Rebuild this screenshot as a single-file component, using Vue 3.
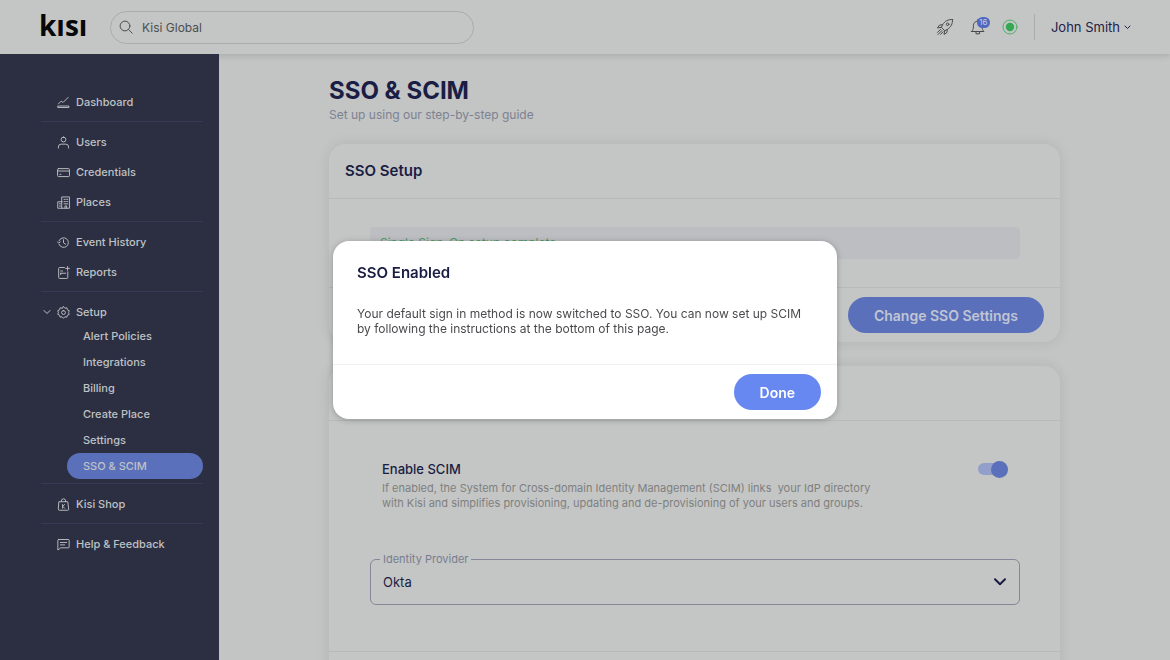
<script setup>
import { ref } from 'vue'

const search = ref('Kisi Global')
const provider = ref('Okta')
const scimEnabled = ref(true)
const dialogOpen = ref(true)

const sections = [
  [{ label: 'Dashboard', icon: 'dashboard' }],
  [
    { label: 'Users', icon: 'users' },
    { label: 'Credentials', icon: 'card' },
    { label: 'Places', icon: 'places' }
  ],
  [
    { label: 'Event History', icon: 'history' },
    { label: 'Reports', icon: 'reports' }
  ],
  [
    {
      label: 'Setup',
      icon: 'gear',
      children: ['Alert Policies', 'Integrations', 'Billing', 'Create Place', 'Settings', 'SSO & SCIM']
    }
  ],
  [{ label: 'Kisi Shop', icon: 'shop' }],
  [{ label: 'Help & Feedback', icon: 'help' }]
]
const current = 'SSO & SCIM'

const icons = {
  dashboard: 'M1.5 8.5 4.5 5.5 6.5 7 12 1.5M1.2 10.8h11.6v1.6H1.2z',
  users: 'M7 1.2a2.6 2.6 0 1 1 0 5.2 2.6 2.6 0 0 1 0-5.2zM1.5 13v-1.2a3 3 0 0 1 3-3h5a3 3 0 0 1 3 3V13',
  card: 'M1.6 2.8h10.8a1 1 0 0 1 1 1v6.6a1 1 0 0 1-1 1H1.6a1 1 0 0 1-1-1V3.8a1 1 0 0 1 1-1zM.6 5.4h12.8M3 9h1.2',
  places: 'M5.5 1h7.9v12.2H5.5zM5.5 6.2H.8v7h4.7M7.6 3.6h1.4M10.4 3.6h1.2M7.6 6h1.4M10.4 6h1.2M7.6 8.4h4M8.6 13v-2.3h1.8V13M2.6 8.4h1.2M2.6 10.8h1.2',
  history: 'M2.2 5.2A5.2 5.2 0 1 1 2.2 9M.4 6.2l1.5 1.6 1.6-1.5M7 4v3.4l2.2 1.4',
  reports: 'M8 1.6H2.8a1 1 0 0 0-1 1v9.8a1 1 0 0 0 1 1h7.8a1 1 0 0 0 1-1V6.2M4 5.4h2M4 7.8h5.4M4 7.8v1.4M11.4 .6v4M9.4 2.6h4',
  gear: 'M7 .7 8.500 2.400 10.700 2 11.200 4.100 13.200 5 12.500 7 13.200 9 11.200 9.900 10.700 12 8.500 11.600 7 13.300 5.500 11.600 3.300 12 2.800 9.900 .8 9 1.500 7 .8 5 2.800 4.100 3.300 2 5.500 2.400zM7 4.900a2.100 2.100 0 1 1 0 4.200 2.100 2.100 0 0 1 0-4.200z',
  shop: 'M2.400 4h9.200l1 8.200a1 1 0 0 1-1 1H2.400a1 1 0 0 1-1-1zM4.700 4V3.200a2.300 2.300 0 0 1 4.600 0V4M6 7v4M8.200 7 6.200 9l2 2',
  help: 'M1.700 1.600h10.600a.8.8 0 0 1 .8.8v7.400a.8.8 0 0 1-.8.8H4L.9 13V2.400a.8.8 0 0 1 .8-.8zM3.600 4.800h6.800M3.600 7.400h4.600'
}
</script>

<template>
  <div class="app">
    <header class="topbar">
      <a class="logo" href="#">kısı</a>
      <label class="search">
        <svg width="14" height="14" viewBox="0 0 14 14" aria-hidden="true">
          <circle cx="6" cy="6" r="4.900" />
          <path d="M9.600 9.600 13.200 13.200" />
        </svg>
        <input v-model="search" type="text" aria-label="Search" />
      </label>
      <div class="tools">
        <button class="tool" type="button" aria-label="What's new">
          <svg width="18" height="18" viewBox="0 0 18 18" aria-hidden="true">
            <path d="M16.500 1.500C12 1.300 9 3 6.500 6.800L5.300 9.300l3.400 3.400 2.500-1.200C15 9 16.700 6 16.500 1.500z" />
            <circle cx="11.600" cy="6.300" r="1.300" />
            <path d="M6.500 6.800 3.600 7 1.500 10l3.800-.7M11.200 11.500l-.2 2.900-3 2.100.7-3.800M4.600 11.300 1.500 14.400M6 12.500l-4 4M7 13.800l-2.300 2.500" />
          </svg>
        </button>
        <button class="tool" type="button" aria-label="Notifications">
          <svg width="16" height="18" viewBox="0 0 16 18" aria-hidden="true">
            <path d="M1.500 13.500h12.500c-1.500-1.300-1.800-2.500-1.800-4.500V7.500a4.400 4.400 0 0 0-8.800 0V9c0 2-.4 3.200-1.900 4.500zM7.800 3V1.500M6 14v1.800h3.600V14" />
          </svg>
          <span class="count">16</span>
        </button>
        <button class="tool" type="button" aria-label="Status">
          <svg width="16" height="16" viewBox="0 0 16 16" aria-hidden="true">
            <circle class="ring" cx="8" cy="8" r="7" />
            <circle class="dot" cx="8" cy="8" r="4.200" />
          </svg>
        </button>
      </div>
      <button class="account" type="button">
        John Smith
        <svg width="7" height="5" viewBox="0 0 7 5" aria-hidden="true"><path d="M1 1l2.500 2.500L6 1" /></svg>
      </button>
    </header>

    <div class="body">
      <nav class="sidebar">
        <ul v-for="(section, i) in sections" :key="i" class="section">
          <li v-for="item in section" :key="item.label">
            <a class="item" href="#">
              <svg v-if="item.children" class="caret" width="8" height="6" viewBox="0 0 8 6" aria-hidden="true">
                <path d="M1 1.500l3 3 3-3" />
              </svg>
              <svg width="13" height="13" viewBox="0 0 14 14" aria-hidden="true"><path :d="icons[item.icon]" /></svg>
              {{ item.label }}
            </a>
            <ul v-if="item.children" class="sublist">
              <li v-for="child in item.children" :key="child">
                <a class="subitem" :class="{ active: child === current }" href="#">{{ child }}</a>
              </li>
            </ul>
          </li>
        </ul>
      </nav>

      <main class="main">
        <h1>SSO &amp; SCIM</h1>
        <p class="subtitle">Set up using our step-by-step guide</p>

        <section class="card">
          <div class="card-head"><h2>SSO Setup</h2></div>
          <div class="card-body">
            <p class="notice">Single Sign-On setup complete</p>
          </div>
          <div class="card-foot">
            <button class="button muted" type="button">Change SSO Settings</button>
          </div>
        </section>

        <section class="card">
          <div class="card-head"></div>
          <div class="card-body scim">
            <div class="setting">
              <div>
                <label class="setting-title" for="scim">Enable SCIM</label>
                <p class="setting-text">
                  If enabled, the System for Cross-domain Identity Management (SCIM) links&nbsp; your IdP directory<br />
                  with Kisi and simplifies provisioning, updating and de-provisioning of your users and groups.
                </p>
              </div>
              <input id="scim" v-model="scimEnabled" class="switch" type="checkbox" />
            </div>
            <div class="field">
              <label for="provider">Identity Provider</label>
              <select id="provider" v-model="provider">
                <option>Okta</option>
              </select>
              <svg width="12" height="8" viewBox="0 0 12 8" aria-hidden="true"><path d="M1 1.200l5 5 5-5" /></svg>
            </div>
          </div>
          <div class="card-foot"></div>
        </section>
      </main>
    </div>

    <div v-if="dialogOpen" class="backdrop">
      <div class="dialog" role="dialog" aria-modal="true" aria-labelledby="dialog-title">
        <div class="dialog-body">
          <h2 id="dialog-title">SSO Enabled</h2>
          <p>
            Your default sign in method is now switched to SSO. You can now set up SCIM<br />
            by following the instructions at the bottom of this page.
          </p>
        </div>
        <div class="dialog-foot">
          <button class="button" type="button" @click="dialogOpen = false">Done</button>
        </div>
      </div>
    </div>
  </div>
</template>

<style>
body {
  margin: 0;
}
</style>

<style scoped>
.app {
  display: flex;
  flex-direction: column;
  height: 100vh;
  overflow: hidden;
  background: #c3c4c4;
  color: #1a1d44;
  font-family: Inter, "Open Sans", sans-serif;
  font-size: 12px;
}
h1, h2, p, ul {
  margin: 0;
  padding: 0;
}
ul {
  list-style: none;
}
a {
  color: inherit;
  text-decoration: none;
}
button, input, select {
  font: inherit;
  color: inherit;
}
button {
  border: 0;
  padding: 0;
  background: none;
  cursor: pointer;
}
svg {
  flex: none;
  fill: none;
  stroke: currentColor;
  stroke-linecap: round;
  stroke-linejoin: round;
}

.topbar {
  position: relative;
  z-index: 1;
  display: flex;
  align-items: center;
  box-sizing: border-box;
  height: 54px;
  flex: none;
  padding: 0 39px;
  background: #c4c6c5;
  box-shadow: 0 2px 6px rgba(0, 0, 0, 0.13);
}
.logo {
  width: 71px;
  padding-bottom: 4px;
  color: #070808;
  font: 700 28px/46px "Open Sans", sans-serif;
}
.search {
  display: flex;
  align-items: center;
  gap: 9px;
  box-sizing: border-box;
  width: 364px;
  height: 33px;
  padding: 0 8px;
  border: 1px solid #aaacab;
  border-radius: 17px;
  color: #4c4e4e;
}
.search input {
  flex: 1;
  min-width: 0;
  border: 0;
  padding: 0;
  outline: 0;
  background: none;
  font-size: 12px;
}
.tools {
  display: flex;
  align-items: center;
  gap: 16px;
  margin-left: auto;
  padding-right: 16px;
  color: #484a4c;
}
.tool {
  position: relative;
  display: flex;
}
.count {
  position: absolute;
  left: 7px;
  top: -1px;
  width: 13px;
  border-radius: 6px;
  background: #4f68c0;
  color: #c8cbd8;
  font-size: 8px;
  line-height: 11px;
  text-align: center;
}
.ring {
  stroke: #4fae68;
}
.dot {
  fill: #35a853;
  stroke: none;
}
.account {
  display: flex;
  align-items: center;
  gap: 4px;
  padding-left: 16px;
  border-left: 1px solid #acaeae;
  color: #1d2148;
  font-size: 13px;
  line-height: 26px;
}

.body {
  display: flex;
  flex: 1;
  min-height: 0;
}
.sidebar {
  position: relative;
  z-index: 2;
  box-sizing: border-box;
  width: 219px;
  flex: none;
  padding: 28px 16px 0 41px;
  background: #2c2f41;
  color: #bfc1c5;
  font-size: 11px;
  font-weight: 500;
}
.section {
  padding: 5px 0 4px;
  border-bottom: 1px solid #363b55;
}
.section:last-child {
  border-bottom: 0;
}
.item {
  position: relative;
  display: flex;
  align-items: center;
  gap: 6px;
  height: 30px;
  padding-left: 16px;
}
.caret {
  position: absolute;
  left: 2px;
}
.sublist {
  margin-top: -4px;
}
.subitem {
  display: block;
  margin-left: 26px;
  padding-left: 16px;
  border-radius: 13px;
  line-height: 26px;
}
.active {
  background: #5b70bb;
}

.main {
  flex: 1;
  min-width: 0;
  overflow: hidden auto;
  scrollbar-width: none;
  padding: 21px 110px 0;
}
h1 {
  font-size: 24px;
  line-height: 32px;
}
.subtitle {
  margin-bottom: 21px;
  color: #7d8292;
  font-size: 12px;
  line-height: 16px;
}
.card {
  margin-bottom: 24px;
  border-radius: 16px;
  background: #c4c6c5;
  box-shadow: 0 0 14px rgba(0, 0, 0, 0.09);
}
.card-head {
  box-sizing: border-box;
  height: 55px;
  padding: 0 16px;
  border-bottom: 1px solid #b8baba;
}
h2 {
  font-size: 15px;
  font-weight: 600;
  line-height: 20px;
}
.card-head h2 {
  line-height: 54px;
}
.card-body {
  padding: 28px 40px 28px 41px;
}
.notice {
  padding: 0 10px;
  border-radius: 4px;
  background: #bdbec1;
  color: #4f9c66;
  font-size: 12px;
  line-height: 32px;
}
.card-foot {
  display: flex;
  justify-content: flex-end;
  box-sizing: border-box;
  min-height: 55px;
  padding: 9px 16px;
  border-top: 1px solid #b8baba;
}
.button {
  height: 36px;
  padding: 0 26px;
  border-radius: 18px;
  background: #6787f1;
  color: #fff;
  font-size: 14px;
  font-weight: 600;
}
.muted {
  background: #5b70bb;
  color: #c0c5d3;
}
.scim {
  padding: 38px 40px 46px 41px;
}
.setting {
  display: flex;
  justify-content: space-between;
  align-items: flex-start;
  padding: 0 12px;
}
.setting-title {
  display: block;
  font-size: 13px;
  font-weight: 500;
  line-height: 20px;
}
.setting-text {
  margin-top: 2px;
  color: #7e8080;
  font-size: 11px;
  line-height: 15px;
}
.switch {
  display: flex;
  align-items: center;
  justify-content: flex-end;
  appearance: none;
  width: 30px;
  height: 12px;
  margin: 4px 0 0;
  border-radius: 6px;
  background: #929fca;
}
.switch::before {
  content: "";
  width: 17px;
  height: 17px;
  flex: none;
  border-radius: 50%;
  background: #5b70bb;
}
.switch:not(:checked) {
  justify-content: flex-start;
}
.field {
  position: relative;
  display: flex;
  align-items: center;
  margin-top: 48px;
}
.field label {
  position: absolute;
  left: 10px;
  top: -8px;
  padding: 0 3px;
  background: #c4c6c5;
  color: #777d90;
  font-size: 11px;
  line-height: 16px;
}
.field select {
  appearance: none;
  box-sizing: border-box;
  width: 100%;
  height: 46px;
  padding: 0 12px;
  border: 1px solid #84889a;
  border-radius: 6px;
  background: none;
  font-size: 13px;
}
.field svg {
  position: absolute;
  right: 14px;
  stroke-width: 2;
  pointer-events: none;
}

.backdrop {
  position: fixed;
  inset: 0;
  z-index: 3;
  display: grid;
  place-items: center;
}
.dialog {
  width: 504px;
  max-width: 100%;
  border-radius: 16px;
  background: #fff;
  box-shadow: 0 1px 6px rgba(0, 0, 0, 0.25);
}
.dialog-body {
  padding: 22px 24px 28px;
}
.dialog p {
  margin-top: 23px;
  color: #4b4b4f;
  font-size: 12px;
  line-height: 15px;
}
.dialog-foot {
  display: flex;
  justify-content: flex-end;
  padding: 9px 16px;
  border-top: 1px solid #f0f0f1;
}
</style>
